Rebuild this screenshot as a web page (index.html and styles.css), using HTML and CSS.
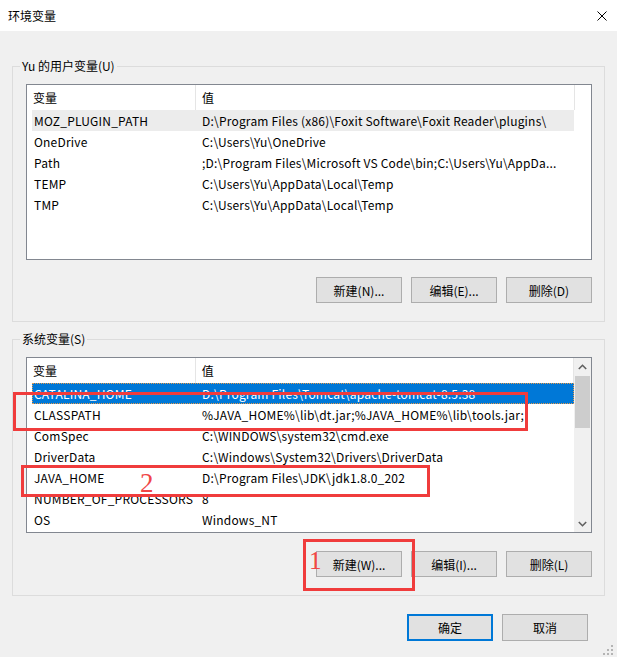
FILE: index.html
```html
<!DOCTYPE html>
<html lang="zh-CN">
<head>
  <meta charset="UTF-8" />
  <title>环境变量</title>
  <link rel="stylesheet" href="styles.css">
</head>
<body>
  <div class="titlebar">
    <span class="title">环境变量</span>
    <svg class="close" width="10" height="10" viewBox="0 0 10 10">
      <path d="M0.5 0.5 L9.5 9.5 M9.5 0.5 L0.5 9.5" stroke="#000" stroke-width="1" fill="none"/>
    </svg>
  </div>

  <main class="content">
    <fieldset class="group">
      <legend>Yu 的用户变量(U)</legend>
      <div class="listview">
        <div class="list-inner">
          <div class="list-header">
            <div class="hcell name">变量</div>
            <div class="hcell">值</div>
          </div>
          <div class="row hot"><span class="cell name">MOZ_PLUGIN_PATH</span><span class="cell">D:\Program Files (x86)\Foxit Software\Foxit Reader\plugins\</span></div>
          <div class="row"><span class="cell name">OneDrive</span><span class="cell">C:\Users\Yu\OneDrive</span></div>
          <div class="row"><span class="cell name">Path</span><span class="cell">;D:\Program Files\Microsoft VS Code\bin;C:\Users\Yu\AppDa...</span></div>
          <div class="row"><span class="cell name">TEMP</span><span class="cell">C:\Users\Yu\AppData\Local\Temp</span></div>
          <div class="row"><span class="cell name">TMP</span><span class="cell">C:\Users\Yu\AppData\Local\Temp</span></div>
        </div>
      </div>
      <div class="button-row">
        <button class="btn">新建(N)...</button>
        <button class="btn">编辑(E)...</button>
        <button class="btn">删除(D)</button>
      </div>
    </fieldset>

    <fieldset class="group system">
      <legend>系统变量(S)</legend>
      <div class="listview">
        <div class="list-inner">
          <div class="list-header">
            <div class="hcell name">变量</div>
            <div class="hcell">值</div>
          </div>
          <div class="row selected"><span class="cell name">CATALINA_HOME</span><span class="cell">D:\Program Files\Tomcat\apache-tomcat-8.5.38</span></div>
          <div class="row"><span class="cell name">CLASSPATH</span><span class="cell">%JAVA_HOME%\lib\dt.jar;%JAVA_HOME%\lib\tools.jar;</span></div>
          <div class="row"><span class="cell name">ComSpec</span><span class="cell">C:\WINDOWS\system32\cmd.exe</span></div>
          <div class="row"><span class="cell name">DriverData</span><span class="cell">C:\Windows\System32\Drivers\DriverData</span></div>
          <div class="row"><span class="cell name">JAVA_HOME</span><span class="cell">D:\Program Files\JDK\jdk1.8.0_202</span></div>
          <div class="row"><span class="cell name">NUMBER_OF_PROCESSORS</span><span class="cell">8</span></div>
          <div class="row"><span class="cell name">OS</span><span class="cell">Windows_NT</span></div>
        </div>
        <div class="scrollbar">
          <div class="sb-arrow">
            <svg width="9" height="6" viewBox="0 0 9 6"><polyline points="0.8,5 4.5,1.3 8.2,5" fill="none" stroke="#606060" stroke-width="1.6"/></svg>
          </div>
          <div class="sb-track"><div class="sb-thumb"></div></div>
          <div class="sb-arrow">
            <svg width="9" height="6" viewBox="0 0 9 6"><polyline points="0.8,1 4.5,4.7 8.2,1" fill="none" stroke="#606060" stroke-width="1.6"/></svg>
          </div>
        </div>
      </div>
      <div class="button-row">
        <button class="btn">新建(W)...</button>
        <button class="btn">编辑(I)...</button>
        <button class="btn">删除(L)</button>
      </div>
    </fieldset>

    <div class="dialog-buttons">
      <button class="btn default">确定</button>
      <button class="btn">取消</button>
    </div>
  </main>

  <!-- hand-drawn red notes on top of the dialog -->
  <div class="mark mark-classpath"></div>
  <div class="mark mark-java"></div>
  <div class="mark mark-new"></div>
  <span class="note note-2">2</span>
  <span class="note note-1">1</span>

  <svg class="grip" width="12" height="12" viewBox="0 0 12 12">
    <rect x="9" y="1" width="2" height="2" fill="#b4b4b4"/>
    <rect x="9" y="5" width="2" height="2" fill="#b4b4b4"/>
    <rect x="5" y="5" width="2" height="2" fill="#b4b4b4"/>
    <rect x="9" y="9" width="2" height="2" fill="#b4b4b4"/>
    <rect x="5" y="9" width="2" height="2" fill="#b4b4b4"/>
    <rect x="1" y="9" width="2" height="2" fill="#b4b4b4"/>
  </svg>
</body>
</html>
```

FILE: styles.css
```css
body {
  margin: 0;
  width: 617px;
  height: 657px;
  overflow: hidden;
  position: relative;
  background: #f0f0f0;
  font-family: "Noto Sans CJK SC", sans-serif;
  font-size: 12px;
  color: #000;
}

.titlebar {
  height: 31px;
  background: #fff;
  display: flex;
  align-items: center;
  padding-left: 8px;
}

.title {
  font-size: 12px;
  line-height: 16px;
}

.close {
  margin-left: auto;
  margin-right: 10px;
}

.content {
  padding: 0 12px;
}

.group {
  margin: 27px 0 0;
  padding: 0 12px 18px 13px;
  border: 1px solid #dcdcdc;
  min-width: 0;
}

.group.system {
  margin-top: 9px;
}

.group legend {
  margin-left: -6px;
  padding: 0 2px;
  line-height: 16px;
}

.listview {
  margin-top: 10px;
  height: 176px;
  box-sizing: border-box;
  border: 1px solid #828790;
  background: #fff;
  display: flex;
  overflow: hidden;
}

.list-inner {
  flex: 1;
  overflow: hidden;
}

.list-header {
  display: flex;
  height: 25px;
  line-height: 25px;
}

.hcell {
  width: 372px;
  padding-left: 6px;
  border-right: 1px solid #e5e5e5;
}

.hcell.name {
  width: 162px;
}

.row {
  display: flex;
  margin-left: 5px;
  width: 542px;
  height: 21px;
  line-height: 21px;
  white-space: nowrap;
  letter-spacing: 0.2px;
}

.cell {
  flex: 1;
  padding-left: 6px;
  overflow: hidden;
}

.cell.name {
  flex: none;
  width: 162px;
  padding-left: 2px;
}

.row.hot {
  background: #ececec;
}

.row.selected {
  background: #0078d7;
  color: #fff;
  outline: 1px dotted #e89a4a;
  outline-offset: -1px;
}

.scrollbar {
  width: 17px;
  background: #f0f0f0;
  display: flex;
  flex-direction: column;
}

.sb-arrow {
  height: 17px;
  display: flex;
  align-items: center;
  justify-content: center;
}

.sb-track {
  flex: 1;
  padding: 1px 1px 0;
}

.sb-thumb {
  height: 52px;
  background: #cdcdcd;
}

.button-row {
  margin-top: 17px;
  display: flex;
  justify-content: flex-end;
  gap: 9px;
}

.group.system .button-row {
  margin-top: 18px;
}

.btn {
  width: 86px;
  height: 26px;
  padding: 0;
  border: 1px solid #adadad;
  background: #e1e1e1;
  font-family: inherit;
  font-size: 12px;
  color: #000;
}

.dialog-buttons {
  margin-top: 18px;
  padding-right: 17px;
  display: flex;
  justify-content: flex-end;
  gap: 9px;
}

.dialog-buttons .btn {
  height: 27px;
}

.btn.default {
  border: 2px solid #0078d7;
}

.mark {
  position: absolute;
  border: 3px solid #f03c3c;
  box-sizing: border-box;
}

.mark-classpath {
  left: 13px;
  top: 392px;
  width: 515px;
  height: 39px;
}

.mark-java {
  left: 21px;
  top: 465px;
  width: 409px;
  height: 32px;
}

.mark-new {
  left: 303px;
  top: 539px;
  width: 112px;
  height: 52px;
}

.note {
  position: absolute;
  font-family: "Liberation Serif", serif;
  color: #f04646;
  line-height: 14px;
}

.note-2 {
  left: 140px;
  top: 476px;
  font-size: 27px;
}

.note-1 {
  left: 309px;
  top: 554px;
  font-size: 25px;
}

.grip {
  position: absolute;
  right: 3px;
  bottom: 1px;
}
```
